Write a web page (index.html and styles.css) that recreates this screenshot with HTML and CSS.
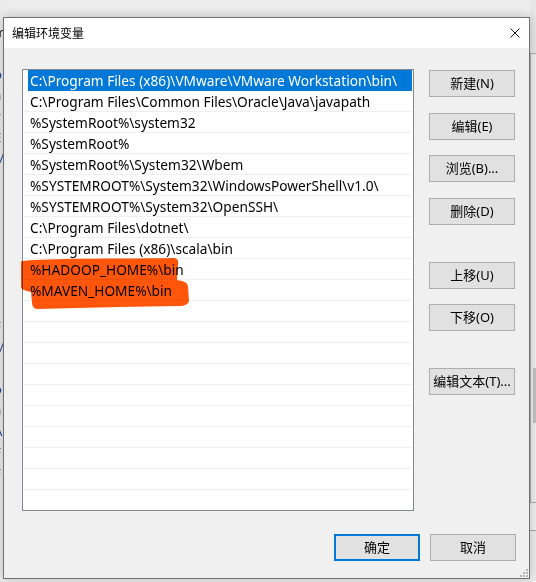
FILE: index.html
```html
<!DOCTYPE html>
<html lang="zh-CN">
<head>
<meta charset="utf-8">
<title>编辑环境变量</title>
<link rel="stylesheet" href="styles.css">
</head>
<body>
<div class="desktop">
  <div class="scraps-left">
    <span>m</span><span>s</span><span class="blue">p</span><span>a</span><span class="blue">y</span><span>E</span><span class="blue">M</span>
    <span></span><span></span><span></span><span></span><span></span><span></span>
    <span>c</span><span class="blue">F</span><span class="blue">M</span><span class="blue">I</span><span class="blue">o</span><span>a</span><span class="blue">A</span><span>F</span><span>F</span>
  </div>
  <div class="scraps-right">
    <div class="r-top"></div>
    <div class="r-line"></div>
    <div class="r-body">
      <div class="r-vline"></div>
      <div class="r-track"><div class="r-thumb"></div></div>
    </div>
    <div class="r-line"></div>
    <div class="r-gap"></div>
    <div class="r-line"></div>
  </div>

  <div class="dialog">
    <div class="titlebar">
      <span class="title">编辑环境变量</span>
      <svg class="close" width="10" height="10" viewBox="0 0 10 10"><path d="M0.5 0.5 L9.5 9.5 M9.5 0.5 L0.5 9.5" stroke="#1a1a1a" stroke-width="1" fill="none"/></svg>
    </div>
    <div class="content">
      <div class="main">
        <div class="listbox">
          <div class="row sel">C:\Program Files (x86)\VMware\VMware Workstation\bin\</div>
          <div class="row">C:\Program Files\Common Files\Oracle\Java\javapath</div>
          <div class="row">%SystemRoot%\system32</div>
          <div class="row">%SystemRoot%</div>
          <div class="row">%SystemRoot%\System32\Wbem</div>
          <div class="row">%SYSTEMROOT%\System32\WindowsPowerShell\v1.0\</div>
          <div class="row">%SYSTEMROOT%\System32\OpenSSH\</div>
          <div class="row">C:\Program Files\dotnet\</div>
          <div class="row">C:\Program Files (x86)\scala\bin</div>
          <div class="row">%HADOOP_HOME%\bin</div>
          <div class="row">%MAVEN_HOME%\bin</div>
          <div class="row"></div>
          <div class="row"></div>
          <div class="row"></div>
          <div class="row"></div>
          <div class="row"></div>
          <div class="row"></div>
          <div class="row"></div>
          <div class="row"></div>
          <div class="row"></div>
          <div class="row"></div>
        </div>
        <div class="side">
          <button class="btn">新建(N)</button>
          <button class="btn">编辑(E)</button>
          <button class="btn">浏览(B)...</button>
          <button class="btn">删除(D)</button>
          <button class="btn sep">上移(U)</button>
          <button class="btn">下移(O)</button>
          <button class="btn sep">编辑文本(T)...</button>
        </div>
      </div>
      <div class="footer">
        <button class="btn primary">确定</button>
        <button class="btn">取消</button>
      </div>
    </div>
    <svg class="grip" width="8" height="8" viewBox="0 0 8 8">
      <rect x="6" y="0" width="2" height="2" fill="#b8b8b8"/>
      <rect x="3" y="3" width="2" height="2" fill="#b8b8b8"/>
      <rect x="6" y="3" width="2" height="2" fill="#b8b8b8"/>
      <rect x="0" y="6" width="2" height="2" fill="#b8b8b8"/>
      <rect x="3" y="6" width="2" height="2" fill="#b8b8b8"/>
      <rect x="6" y="6" width="2" height="2" fill="#b8b8b8"/>
    </svg>
  </div>

  <svg class="scribble" width="180" height="60" viewBox="0 0 180 60">
    <path d="M3 5 C30 2 90 3 154 2 C158 2 160 4 159 9 L158 24 C164 25 168 26 169 30 L170 45 C169 48 166 50 160 50 L100 51 L18 53 C15 53 13 50 13 46 L12 36 C7 35 3 34 2 31 L2 10 C2 7 2 5 3 5 Z" fill="#ff560b"/>
  </svg>
</div>
</body>
</html>
```

FILE: styles.css
```css
* { box-sizing: border-box; }
html, body { margin: 0; padding: 0; }
body { background: #ececec; }

.desktop {
  position: relative;
  width: 536px;
  height: 582px;
  overflow: hidden;
  background: #ececec;
  padding: 17px 0 0 3px;
  font-family: "Noto Sans", "Noto Sans CJK SC", sans-serif;
}

/* background window fragments */
.scraps-left {
  position: absolute;
  left: -6px;
  top: 22px;
  width: 9px;
  display: flex;
  flex-direction: column;
  font-size: 13px;
  color: #222;
  z-index: 0;
}
.scraps-left span { height: 21px; line-height: 21px; display: block; }
.scraps-left .blue { color: #1f3f9a; }

.scraps-right {
  position: absolute;
  left: 530px;
  top: 0;
  width: 6px;
  height: 582px;
  display: flex;
  flex-direction: column;
  z-index: 0;
}
.r-top { height: 53px; background: #e6e6e6; }
.r-line { height: 1px; background: #a8a8a8; }
.r-body { height: 448px; display: flex; background: #f0f0f0; }
.r-vline { width: 1px; background: #b0b0b0; }
.r-track { flex: 1; padding-top: 314px; padding-left: 2px; }
.r-thumb { height: 55px; background: #c2c2c2; }
.r-gap { height: 27px; background: #f0f0f0; }

/* dialog */
.dialog {
  position: relative;
  z-index: 1;
  width: 527px;
  height: 562px;
  border: 1px solid #6f6f6f;
  background: #f0f0f0;
  box-shadow: 0 0 10px rgba(0, 0, 0, 0.22);
  display: flex;
  flex-direction: column;
}

.titlebar {
  height: 30px;
  background: #ffffff;
  display: flex;
  align-items: center;
  justify-content: space-between;
  padding: 0 9px 0 8px;
}
.title {
  font-family: "Noto Sans CJK SC", sans-serif;
  font-size: 12px;
  color: #000;
  line-height: 1;
}
.close { display: block; }

.content {
  flex: 1;
  display: flex;
  flex-direction: column;
  padding: 21px 13px 0 18px;
}

.main { display: flex; gap: 15px; }

.listbox {
  width: 392px;
  height: 442px;
  border: 1px solid #828790;
  background: #ffffff;
  overflow: hidden;
  display: flex;
  flex-direction: column;
}

.row {
  flex: none;
  height: 21px;
  margin: 0 1px;
  padding-left: 6px;
  border-bottom: 1px solid #efefef;
  display: flex;
  align-items: center;
  font-size: 13.7px;
  color: #000;
  white-space: nowrap;
}
.row.sel {
  margin-left: 5px;
  padding-left: 2px;
  background: #0078d7;
  border-bottom-color: #0078d7;
  color: #ffffff;
}

.side {
  display: flex;
  flex-direction: column;
  gap: 15.6px;
  padding-top: 1px;
}

.btn {
  width: 86px;
  height: 27px;
  margin: 0;
  padding: 0;
  background: #e1e1e1;
  border: 1px solid #adadad;
  font-family: "Noto Sans", "Noto Sans CJK SC", sans-serif;
  font-size: 13px;
  color: #000;
  line-height: 1;
}
.btn.sep { margin-top: 21.4px; }
.btn.primary { border: 2px solid #0078d7; }

.footer {
  display: flex;
  justify-content: flex-end;
  gap: 10px;
  margin-top: 23px;
}

.grip {
  position: absolute;
  right: 1px;
  bottom: 1px;
}

.scribble {
  position: absolute;
  left: 19px;
  top: 256px;
  mix-blend-mode: multiply;
  z-index: 2;
}
```
